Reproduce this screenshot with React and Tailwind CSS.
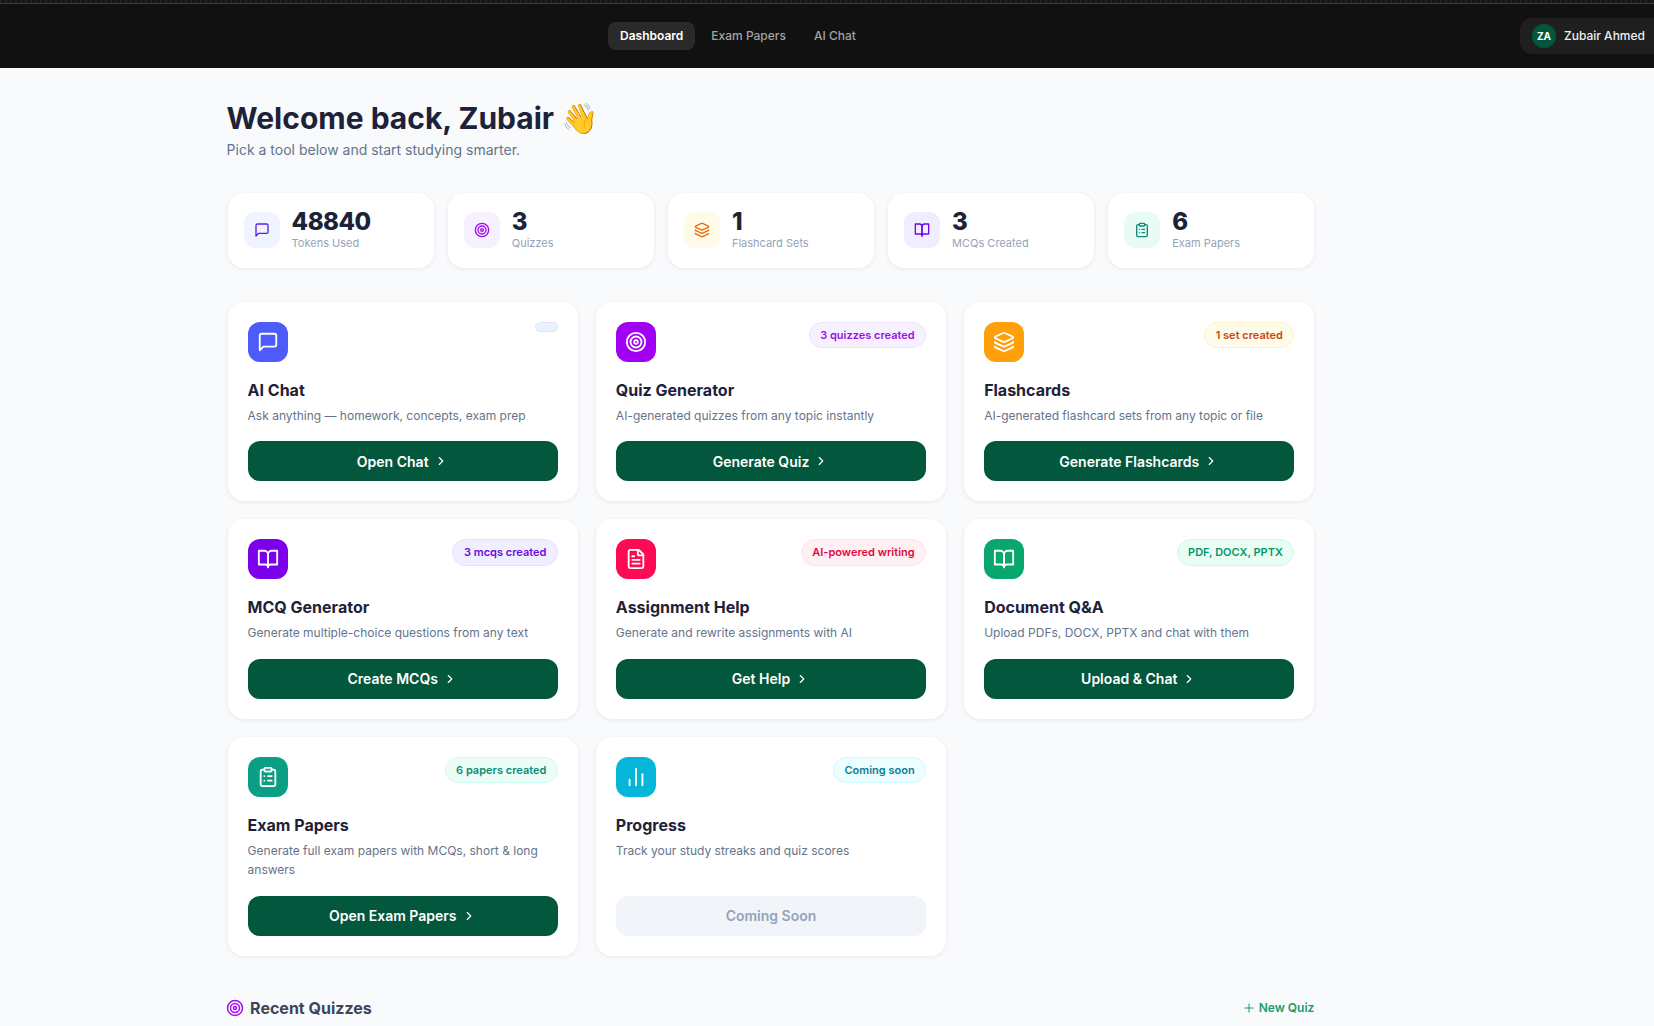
import { BarChart2, ChevronRight, ClipboardList, FileText, Layers, Plus, Target } from 'lucide-react'

const ChatIcon = ({ size, className }) => (
  <svg width={size} height={size} viewBox="0 0 24 24" fill="none" stroke="currentColor" strokeWidth="2" strokeLinecap="round" strokeLinejoin="round" className={className}>
    <path d="M21 15a2 2 0 0 1-2 2H7l-4 4V5a2 2 0 0 1 2-2h14a2 2 0 0 1 2 2z" />
  </svg>
)

const BookIcon = ({ size, className }) => (
  <svg width={size} height={size} viewBox="0 0 24 24" fill="none" stroke="currentColor" strokeWidth="2" strokeLinecap="round" strokeLinejoin="round" className={className}>
    <path d="M2 3h6a4 4 0 0 1 4 4v14a3 3 0 0 0-3-3H2z" />
    <path d="M22 3h-6a4 4 0 0 0-4 4v14a3 3 0 0 1 3-3h7z" />
  </svg>
)

const navLinks = ['Dashboard', 'Exam Papers', 'AI Chat']

const stats = [
  { value: '48840', label: 'Tokens Used', Icon: ChatIcon, box: 'bg-[#eff4ff]', color: 'text-[#5b21e6]' },
  { value: '3', label: 'Quizzes', Icon: Target, box: 'bg-[#f6f0ff]', color: 'text-[#a30df0]' },
  { value: '1', label: 'Flashcard Sets', Icon: Layers, box: 'bg-[#fefce8]', color: 'text-[#ea6c0a]' },
  { value: '3', label: 'MCQs Created', Icon: BookIcon, box: 'bg-[#eeeeff]', color: 'text-[#6d0ae8]' },
  { value: '6', label: 'Exam Papers', Icon: ClipboardList, box: 'bg-[#e9fbf6]', color: 'text-[#0d8a74]' },
]

const tools = [
  {
    title: 'AI Chat',
    text: 'Ask anything — homework, concepts, exam prep',
    action: 'Open Chat',
    Icon: ChatIcon,
    iconBox: 'bg-[#4c5bfa]',
    badge: '',
    badgeStyle: 'bg-[#eaf1ff] border-[#dbe6fe] text-[#4338ca]',
  },
  {
    title: 'Quiz Generator',
    text: 'AI-generated quizzes from any topic instantly',
    action: 'Generate Quiz',
    Icon: Target,
    iconBox: 'bg-[#a100f2]',
    badge: '3 quizzes created',
    badgeStyle: 'bg-[#f7f0ff] border-[#efe3fe] text-[#9810e8]',
  },
  {
    title: 'Flashcards',
    text: 'AI-generated flashcard sets from any topic or file',
    action: 'Generate Flashcards',
    Icon: Layers,
    iconBox: 'bg-[#ff9f0a]',
    badge: '1 set created',
    badgeStyle: 'bg-[#fffbeb] border-[#fef3c7] text-[#d1450c]',
  },
  {
    title: 'MCQ Generator',
    text: 'Generate multiple-choice questions from any text',
    action: 'Create MCQs',
    Icon: BookIcon,
    iconBox: 'bg-[#7c00ea]',
    badge: '3 mcqs created',
    badgeStyle: 'bg-[#f0efff] border-[#e4e2fe] text-[#6d0ae0]',
  },
  {
    title: 'Assignment Help',
    text: 'Generate and rewrite assignments with AI',
    action: 'Get Help',
    Icon: FileText,
    iconBox: 'bg-[#ff0a54]',
    badge: 'AI-powered writing',
    badgeStyle: 'bg-[#fff1f3] border-[#ffe2e7] text-[#e00a43]',
  },
  {
    title: 'Document Q&A',
    text: 'Upload PDFs, DOCX, PPTX and chat with them',
    action: 'Upload & Chat',
    Icon: BookIcon,
    iconBox: 'bg-[#09a66d]',
    badge: 'PDF, DOCX, PPTX',
    badgeStyle: 'bg-[#e9fdf3] border-[#d1fae5] text-[#059669]',
  },
  {
    title: 'Exam Papers',
    text: 'Generate full exam papers with MCQs, short & long answers',
    action: 'Open Exam Papers',
    Icon: ClipboardList,
    iconBox: 'bg-[#0a9f85]',
    badge: '6 papers created',
    badgeStyle: 'bg-[#ecfdf8] border-[#ccfbef] text-[#0d8a74]',
  },
  {
    title: 'Progress',
    text: 'Track your study streaks and quiz scores',
    action: 'Coming Soon',
    Icon: BarChart2,
    iconBox: 'bg-[#06b6d8]',
    badge: 'Coming soon',
    badgeStyle: 'bg-[#ecfeff] border-[#cffafe] text-[#0e7f93]',
    disabled: true,
  },
]

const Header = () => (
  <header className="h-[68px] shrink-0 overflow-hidden bg-[#111111]">
    <div className="h-[3px] bg-[repeating-linear-gradient(90deg,#1f1f1f_0_2px,#161616_2px_5px)]" />
    <div className="h-px bg-[#3d3d3d]" />
    <div className="flex h-[64px] items-center pl-[608px]">
      <nav className="flex items-center gap-[4px]">
        {navLinks.map((link, index) => (
          <a
            key={link}
            className={
              index === 0
                ? 'h-[28px] rounded-lg bg-[#2a2a2a] px-[12px] text-[12px] leading-[28px] font-semibold text-white'
                : 'h-[28px] rounded-lg px-[12px] text-[12px] leading-[28px] font-medium text-[#a3a3a3]'
            }
          >
            {link}
          </a>
        ))}
      </nav>
      <div className="-mr-[16px] ml-auto flex h-[36px] w-[150px] shrink-0 items-center gap-[8px] rounded-xl bg-[#1f1f1f] pl-[12px]">
        <span className="flex h-[24px] w-[24px] items-center justify-center rounded-full bg-[#03573d] text-[10px] font-bold text-white">
          ZA
        </span>
        <span className="text-[12px] font-medium whitespace-nowrap text-[#f0f0f0]">Zubair Ahmed</span>
      </div>
    </div>
  </header>
)

const StatCard = ({ value, label, Icon, box, color }) => (
  <div className="flex h-[75px] items-center gap-[12px] rounded-2xl bg-white pl-[16px] shadow-[0_1px_4px_rgba(15,23,42,0.08)]">
    <div className={`flex h-[36px] w-[36px] items-center justify-center rounded-[11px] ${box}`}>
      <Icon size={16} className={color} />
    </div>
    <div className="-mt-[0.5px]">
      <p className="text-[24px] leading-[24px] font-extrabold tracking-[-0.02em] text-[#1e2238]">{value}</p>
      <p className="mt-[1.5px] text-[11px] leading-[14px] text-[#94a3b8]">{label}</p>
    </div>
  </div>
)

const ToolCard = ({ title, text, action, Icon, iconBox, badge, badgeStyle, disabled }) => (
  <div className="flex flex-col rounded-2xl bg-white p-[20px] shadow-[0_1px_4px_rgba(15,23,42,0.08)]">
    <div className="flex items-start justify-between">
      <div className={`flex h-[40px] w-[40px] items-center justify-center rounded-xl ${iconBox}`}>
        <Icon size={22} className="text-white" />
      </div>
      <span className={`rounded-full border px-[10.5px] py-[4px] text-[11px] leading-[16.5px] font-semibold ${badgeStyle}`}>
        {badge}
      </span>
    </div>
    <h3 className="mt-[16px] text-[16px] leading-[24px] font-bold text-[#1e2238]">{title}</h3>
    <p className="mt-[4px] mb-[16px] text-[12px] leading-[19.5px] text-[#64748b]">{text}</p>
    {disabled ? (
      <button className="mt-auto flex h-[40px] items-center justify-center rounded-xl bg-[#f1f5f9] text-[14px] font-semibold text-[#94a3b8]">
        {action}
      </button>
    ) : (
      <button className="mt-auto flex h-[40px] items-center justify-center gap-[5px] rounded-xl bg-[#03573d] pr-[1px] text-[14px] font-semibold text-white">
        {action}
        <ChevronRight size={14} />
      </button>
    )}
  </div>
)

export default function App() {
  return (
    <div className="flex h-screen flex-col overflow-hidden bg-[#f8fafc] font-['Inter',sans-serif]">
      <Header />
      <main className="ml-[227.6px] w-[1086.8px] pt-[32px]">
        <h1 className="-ml-px text-[30px] leading-[36px] font-bold text-[#1e2238]">
          Welcome back, Zubair <span className="font-['Noto_Color_Emoji','Inter',sans-serif]">👋</span>
        </h1>
        <p className="mt-[2px] -ml-px text-[14px] leading-[21px] text-[#64748b]">Pick a tool below and start studying smarter.</p>

        <section className="mt-[32.6px] grid grid-cols-5 gap-[14px]">
          {stats.map((stat) => (
            <StatCard key={stat.label} {...stat} />
          ))}
        </section>

        <section className="mt-[34px] grid grid-cols-3 gap-[18px]">
          {tools.map((tool) => (
            <ToolCard key={tool.title} {...tool} />
          ))}
        </section>

        <div className="mt-[40px] flex items-center justify-between">
          <h2 className="-ml-[1.5px] flex items-center gap-[6px] text-[16px] leading-[24px] font-bold text-[#3f4558]">
            <Target size={18} className="text-[#a30df0]" />
            Recent Quizzes
          </h2>
          <a className="flex items-center gap-[3px] text-[12px] font-semibold text-[#1a9b6e]">
            <Plus size={14} strokeWidth={1.75} />
            New Quiz
          </a>
        </div>
      </main>
    </div>
  )
}
